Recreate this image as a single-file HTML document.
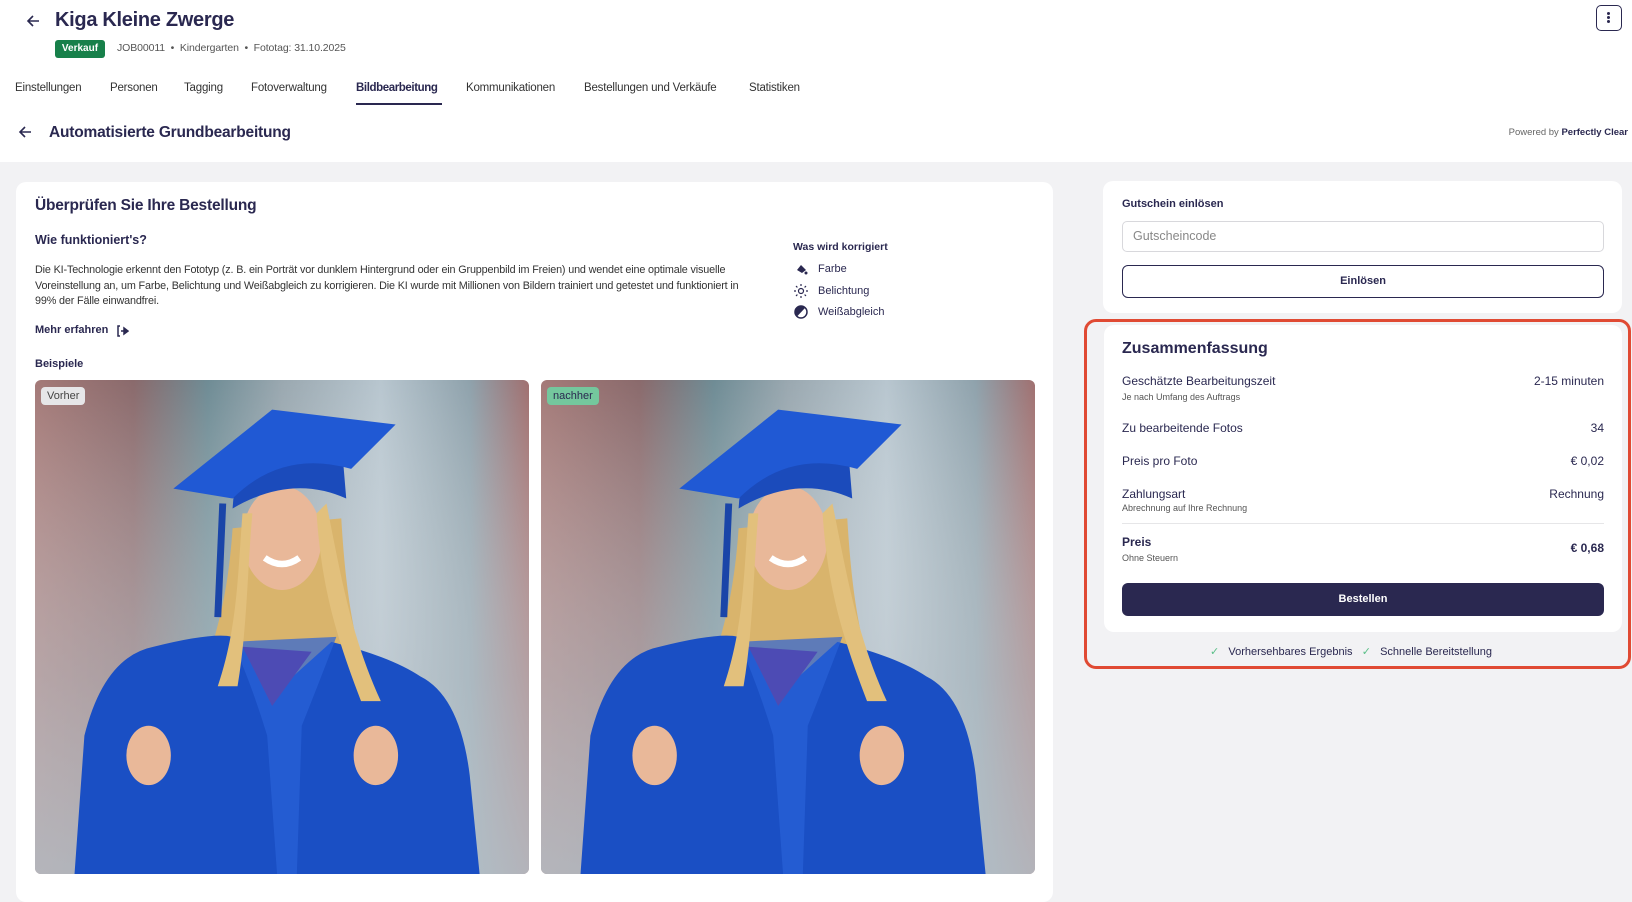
<!DOCTYPE html>
<html><head><meta charset="utf-8">
<style>
*{box-sizing:border-box;margin:0;padding:0}
body{width:1632px;height:890px;overflow:hidden;background:#f2f2f4;font-family:"Liberation Sans",sans-serif;color:#2a2850;position:relative}
.abs{position:absolute;white-space:nowrap}
.hdr{position:absolute;left:0;top:0;width:1632px;height:162px;background:#fff}
.card{position:absolute;background:#fff;border-radius:10px}
.lbl{font-size:12px;color:#2a2850}
.sub{font-size:9px;color:#555}
.photo{position:absolute;top:380px;width:494px;height:494px;border-radius:6px;overflow:hidden}
.tag{position:absolute;left:6px;top:7px;padding:3px 6px;border-radius:4px;font-size:11px}
.tab{position:absolute;top:82px;font-size:11.5px;color:#333;letter-spacing:-0.2px;white-space:nowrap}
</style></head><body>
<div class="hdr"></div>
<svg class="abs" style="left:25px;top:13px" width="16" height="16" viewBox="0 0 16 16"><path d="M14 8H3M8 3L3 8l5 5" stroke="#2a2850" stroke-width="1.6" fill="none"/></svg>
<div class="abs" style="left:55px;top:9px;font-size:20px;font-weight:bold;letter-spacing:-0.3px">Kiga Kleine Zwerge</div>
<div class="abs" style="left:55px;top:40px;width:50px;height:18px;background:#17804a;color:#fff;border-radius:3px;font-size:10px;font-weight:bold;text-align:center;line-height:18px">Verkauf</div>
<div class="abs" style="left:117px;top:42px;font-size:10.5px;color:#555;letter-spacing:-0.1px">JOB00011 &nbsp;•&nbsp; Kindergarten &nbsp;•&nbsp; Fototag: 31.10.2025</div>
<div class="abs" style="left:1596px;top:5px;width:26px;height:26px;border:1.5px solid #2a2850;border-radius:5px"><div style="position:absolute;left:10px;top:6px;width:3px;height:3px;background:#2a2850;border-radius:50%;box-shadow:0 4px 0 #2a2850,0 8px 0 #2a2850"></div></div>
<div class="tab" style="left:15px">Einstellungen</div>
<div class="tab" style="left:110px">Personen</div>
<div class="tab" style="left:184px">Tagging</div>
<div class="tab" style="left:251px">Fotoverwaltung</div>
<div class="tab" style="color:#2a2850;font-weight:bold;left:356px;letter-spacing:-0.4px">Bildbearbeitung</div>
<div class="abs" style="left:356px;top:103px;width:86px;height:2px;background:#2a2850"></div>
<div class="tab" style="left:466px">Kommunikationen</div>
<div class="tab" style="left:584px">Bestellungen und Verkäufe</div>
<div class="tab" style="left:749px">Statistiken</div>
<svg class="abs" style="left:17px;top:124px" width="16" height="16" viewBox="0 0 16 16"><path d="M14 8H3M8 3L3 8l5 5" stroke="#2a2850" stroke-width="1.6" fill="none"/></svg>
<div class="abs" style="left:49px;top:124px;font-size:15.5px;font-weight:bold;letter-spacing:-0.2px">Automatisierte Grundbearbeitung</div>
<div class="abs" style="right:4px;top:127px;font-size:9.5px;color:#666">Powered by <b style="color:#2a2850">Perfectly Clear</b></div>

<div class="card" style="left:16px;top:182px;width:1037px;height:720px"></div>
<div class="abs" style="left:35px;top:197px;font-size:15.5px;font-weight:bold;letter-spacing:-0.2px">Überprüfen Sie Ihre Bestellung</div>
<div class="abs" style="left:35px;top:233px;font-size:12.5px;font-weight:bold">Wie funktioniert's?</div>
<div class="abs" style="left:35px;top:263px;font-size:10.8px;line-height:15.6px;color:#333;white-space:normal;width:722px;letter-spacing:-0.15px">Die KI-Technologie erkennt den Fototyp (z. B. ein Porträt vor dunklem Hintergrund oder ein Gruppenbild im Freien) und wendet eine optimale visuelle Voreinstellung an, um Farbe, Belichtung und Weißabgleich zu korrigieren. Die KI wurde mit Millionen von Bildern trainiert und getestet und funktioniert in 99% der Fälle einwandfrei.</div>
<div class="abs" style="left:35px;top:324px;font-size:11px;font-weight:bold">Mehr erfahren</div>
<svg class="abs" style="left:116px;top:325px" width="13" height="12" viewBox="0 0 13 12"><path d="M4 1H2v10h2" stroke="#2a2850" stroke-width="1.5" fill="none"/><path d="M5 6h4M8 3l4 3-4 3z" stroke="#2a2850" stroke-width="1.5" fill="#2a2850"/></svg>
<div class="abs" style="left:35px;top:358px;font-size:11px;font-weight:bold">Beispiele</div>
<div class="abs" style="left:793px;top:241px;font-size:10.5px;font-weight:bold">Was wird korrigiert</div>
<svg class="abs" style="left:795px;top:263px" width="13" height="13" viewBox="0 0 13 13"><path d="M2 7l4-5 5 5-4 3z" fill="#2a2850"/><circle cx="11" cy="10" r="1.5" fill="#2a2850"/></svg>
<div class="abs" style="left:818px;top:263px;font-size:11px">Farbe</div>
<svg class="abs" style="left:794px;top:284px" width="14" height="14" viewBox="0 0 14 14"><circle cx="7" cy="7" r="2.5" fill="none" stroke="#2a2850" stroke-width="1.2"/><path d="M7 0v2M7 12v2M0 7h2M12 7h2M2 2l1.4 1.4M10.6 10.6L12 12M2 12l1.4-1.4M10.6 3.4L12 2" stroke="#2a2850" stroke-width="1.2"/></svg>
<div class="abs" style="left:818px;top:285px;font-size:11px">Belichtung</div>
<svg class="abs" style="left:794px;top:305px" width="14" height="14" viewBox="0 0 14 14"><circle cx="7" cy="7" r="6" fill="none" stroke="#2a2850" stroke-width="1.5"/><path d="M7 1a6 6 0 0 0 -4 10.5L11 3A6 6 0 0 0 7 1z" fill="#2a2850"/></svg>
<div class="abs" style="left:818px;top:306px;font-size:11px">Weißabgleich</div>

<svg width="0" height="0" style="position:absolute"><defs>
<linearGradient id="bg" x1="0" x2="1"><stop offset="0" stop-color="#a47a78"/><stop offset=".2" stop-color="#8a6a6c"/><stop offset=".35" stop-color="#6f8c95"/><stop offset=".5" stop-color="#9aa8b0"/><stop offset=".7" stop-color="#b8c6cf"/><stop offset=".88" stop-color="#8fa2ac"/><stop offset="1" stop-color="#a07070"/></linearGradient>
<linearGradient id="bg2" x1="0" y1="0" x2="0" y2="1"><stop offset="0" stop-color="#fff" stop-opacity="0"/><stop offset=".6" stop-color="#c8d0d6" stop-opacity=".5"/><stop offset="1" stop-color="#b8c4cc" stop-opacity=".8"/></linearGradient>
<g id="ph">
<rect width="100" height="100" fill="url(#bg)"/><rect width="100" height="100" fill="url(#bg2)"/>
<path d="M40 30C39 45 36 56 30 68L70 68C65 56 63 45 62 28Z" fill="#d9b46c"/>
<path d="M8 100L10 72Q14 56 24 54Q36 51 40 52L50 62L60 53Q72 56 78 60Q86 64 88 80L90 100Z" fill="#1a4fc4"/>
<path d="M42 54L48 66L56 55Z" fill="#a0155e"/>
<path d="M40 53Q44 62 47 72L49 100L53 100L54 70Q58 60 61 52" fill="#2a62d8" opacity=".7"/>
<ellipse cx="50" cy="32" rx="8" ry="10.5" fill="#e9b899"/>
<path d="M46.5 36q3.5 2.5 7 0" stroke="#fff" stroke-width="1.3" fill="none"/>
<path d="M42 27C41 40 41 50 37 62L41 62C43 50 43 38 44 27ZM57 27C58 42 61 52 66 65L70 65C64 52 62 40 59 25Z" fill="#e2c07c"/>
<ellipse cx="23" cy="76" rx="4.5" ry="6" fill="#e9b899"/><ellipse cx="69" cy="76" rx="4.5" ry="6" fill="#e9b899"/>
<path d="M40 26L41 13L62 12L63 24Q52 19 40 26Z" fill="#1b4bbb"/>
<path d="M28 22L48 6L73 9L64 18Q50 14 40 24Z" fill="#2059d4"/>
<path d="M38 25L37 48" stroke="#1a45a8" stroke-width="1.4"/>
</g></defs></svg>
<div class="photo" style="left:35px"><svg width="494" height="494" viewBox="0 0 100 100" preserveAspectRatio="none"><use href="#ph"/></svg><div class="tag" style="background:#e6e6e8;color:#444">Vorher</div></div>
<div class="photo" style="left:541px"><svg width="494" height="494" viewBox="0 0 100 100" preserveAspectRatio="none"><use href="#ph"/></svg><div class="tag" style="background:#74c79d;color:#2a2850">nachher</div></div>

<div class="card" style="left:1103px;top:181px;width:519px;height:132px"></div>
<div class="abs" style="left:1122px;top:198px;font-size:11px;font-weight:bold">Gutschein einlösen</div>
<div class="abs" style="left:1122px;top:221px;width:482px;height:31px;border:1px solid #d8d8dc;border-radius:5px;font-size:12.5px;color:#888;padding:7px 10px">Gutscheincode</div>
<div class="abs" style="left:1122px;top:265px;width:482px;height:33px;border:1.5px solid #2a2850;border-radius:6px;font-size:11px;font-weight:bold;text-align:center;line-height:30px">Einlösen</div>

<div class="abs" style="left:1084px;top:319px;width:547px;height:350px;border:3px solid #e04a33;border-radius:12px"></div>
<div class="card" style="left:1104px;top:325px;width:518px;height:307px"></div>
<div class="abs" style="left:1122px;top:340px;font-size:16px;font-weight:bold">Zusammenfassung</div>
<div class="abs lbl" style="left:1122px;top:374px">Geschätzte Bearbeitungszeit</div>
<div class="abs sub" style="left:1122px;top:392px">Je nach Umfang des Auftrags</div>
<div class="abs lbl" style="right:28px;top:374px">2-15 minuten</div>
<div class="abs lbl" style="left:1122px;top:421px">Zu bearbeitende Fotos</div>
<div class="abs lbl" style="right:28px;top:421px">34</div>
<div class="abs lbl" style="left:1122px;top:454px">Preis pro Foto</div>
<div class="abs lbl" style="right:28px;top:454px">€ 0,02</div>
<div class="abs lbl" style="left:1122px;top:487px">Zahlungsart</div>
<div class="abs sub" style="left:1122px;top:503px">Abrechnung auf Ihre Rechnung</div>
<div class="abs lbl" style="right:28px;top:487px">Rechnung</div>
<div class="abs" style="left:1122px;top:523px;width:482px;height:1px;background:#e6e6e8"></div>
<div class="abs lbl" style="left:1122px;top:535px;font-weight:bold">Preis</div>
<div class="abs sub" style="left:1122px;top:553px">Ohne Steuern</div>
<div class="abs lbl" style="right:28px;top:541px;font-weight:bold">€ 0,68</div>
<div class="abs" style="left:1122px;top:583px;width:482px;height:33px;background:#2a2850;border-radius:6px;color:#fff;font-size:11px;font-weight:bold;text-align:center;line-height:33px">Bestellen</div>
<div class="abs" style="left:1210px;top:645px;font-size:11px"><span style="color:#5bbf88">✓</span>&nbsp;&nbsp;&nbsp;Vorhersehbares Ergebnis&nbsp;&nbsp;&nbsp;<span style="color:#5bbf88">✓</span>&nbsp;&nbsp;&nbsp;Schnelle Bereitstellung</div>
</body></html>
